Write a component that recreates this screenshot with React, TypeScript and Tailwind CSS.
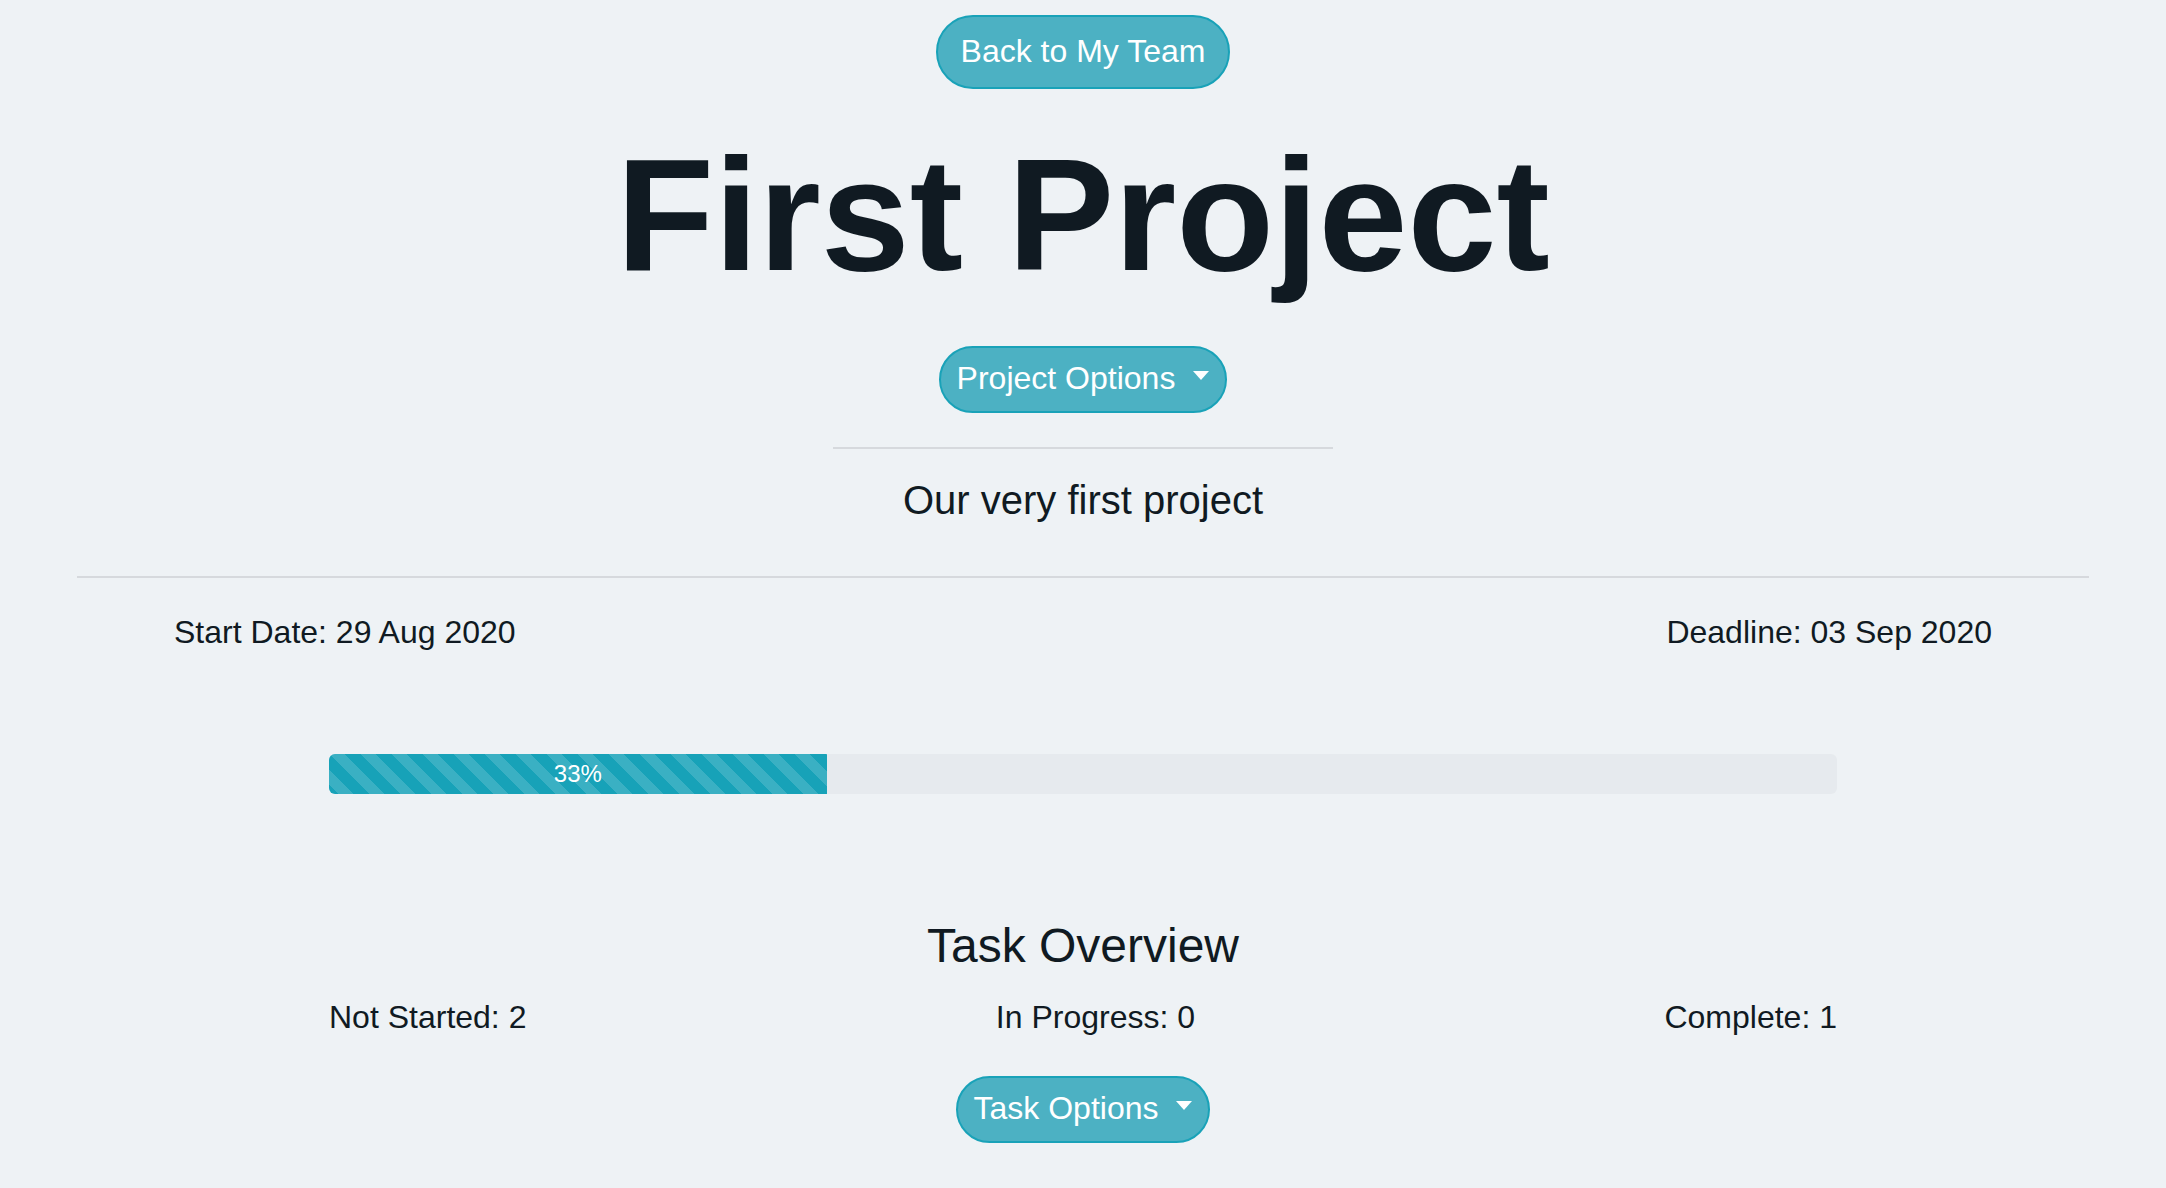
import React from "react";

function Caret() {
  return (
    <span className="mb-[5px] inline-block h-0 w-0 border-l-[8px] border-r-[8px] border-t-[9px] border-l-transparent border-r-transparent border-t-white" />
  );
}

export default function App() {
  const pct = 33;
  return (
    <div className="min-h-screen w-full bg-[#eef2f5] font-['Liberation_Sans',Arial,Helvetica,sans-serif] text-[#101a22]">
      <div className="flex flex-col items-center">
        <button className="mt-[15px] flex h-[74px] items-center rounded-full border-2 border-[#19a2b8] bg-[#4cb1c3] px-[23px] pb-[3px] text-[32px] leading-none text-white">
          Back to My Team
        </button>

        <h1 className="mt-[46px] text-[160px] font-bold leading-none">First Project</h1>

        <button className="mt-[51px] flex h-[67px] items-center gap-[18px] rounded-full border-2 border-[#19a2b8] bg-[#4cb1c3] px-[16px] pb-[3px] text-[32px] leading-none text-white">
          <span>Project Options</span>
          <Caret />
        </button>

        <div className="mt-[34px] h-[2px] w-[500px] bg-[#d6d9dd]" />

        <p className="mt-[31px] text-[40px] leading-none">Our very first project</p>

        <div className="mt-[56px] h-[2px] w-[2012px] bg-[#d6d9dd]" />

        <div className="mt-[38px] flex w-full justify-between px-[174px] text-[32px] leading-none">
          <span>Start Date: 29 Aug 2020</span>
          <span>Deadline: 03 Sep 2020</span>
        </div>

        <div className="mt-[106px] flex h-[40px] w-[1508px] overflow-hidden rounded-[6px] bg-[#e6eaee]">
          <div
            className="flex h-full items-center justify-center bg-[#17a2b8] bg-[linear-gradient(45deg,rgba(255,255,255,0.15)_25%,transparent_25%,transparent_50%,rgba(255,255,255,0.15)_50%,rgba(255,255,255,0.15)_75%,transparent_75%,transparent)] bg-[length:31px_31px] text-[24px] leading-none text-white"
            style={{ width: `${pct}%` }}
          >
            33%
          </div>
        </div>

        <h3 className="mt-[128px] text-[48px] font-normal leading-none">Task Overview</h3>

        <div className="mt-[31px] flex w-[1508px] justify-between text-[32px] leading-none">
          <span>Not Started: 2</span>
          <span>In Progress: 0</span>
          <span>Complete: 1</span>
        </div>

        <button className="mt-[43px] mb-[45px] flex h-[67px] items-center gap-[18px] rounded-full border-2 border-[#19a2b8] bg-[#4cb1c3] px-[16px] pb-[3px] text-[32px] leading-none text-white">
          <span>Task Options</span>
          <Caret />
        </button>
      </div>
    </div>
  );
}
